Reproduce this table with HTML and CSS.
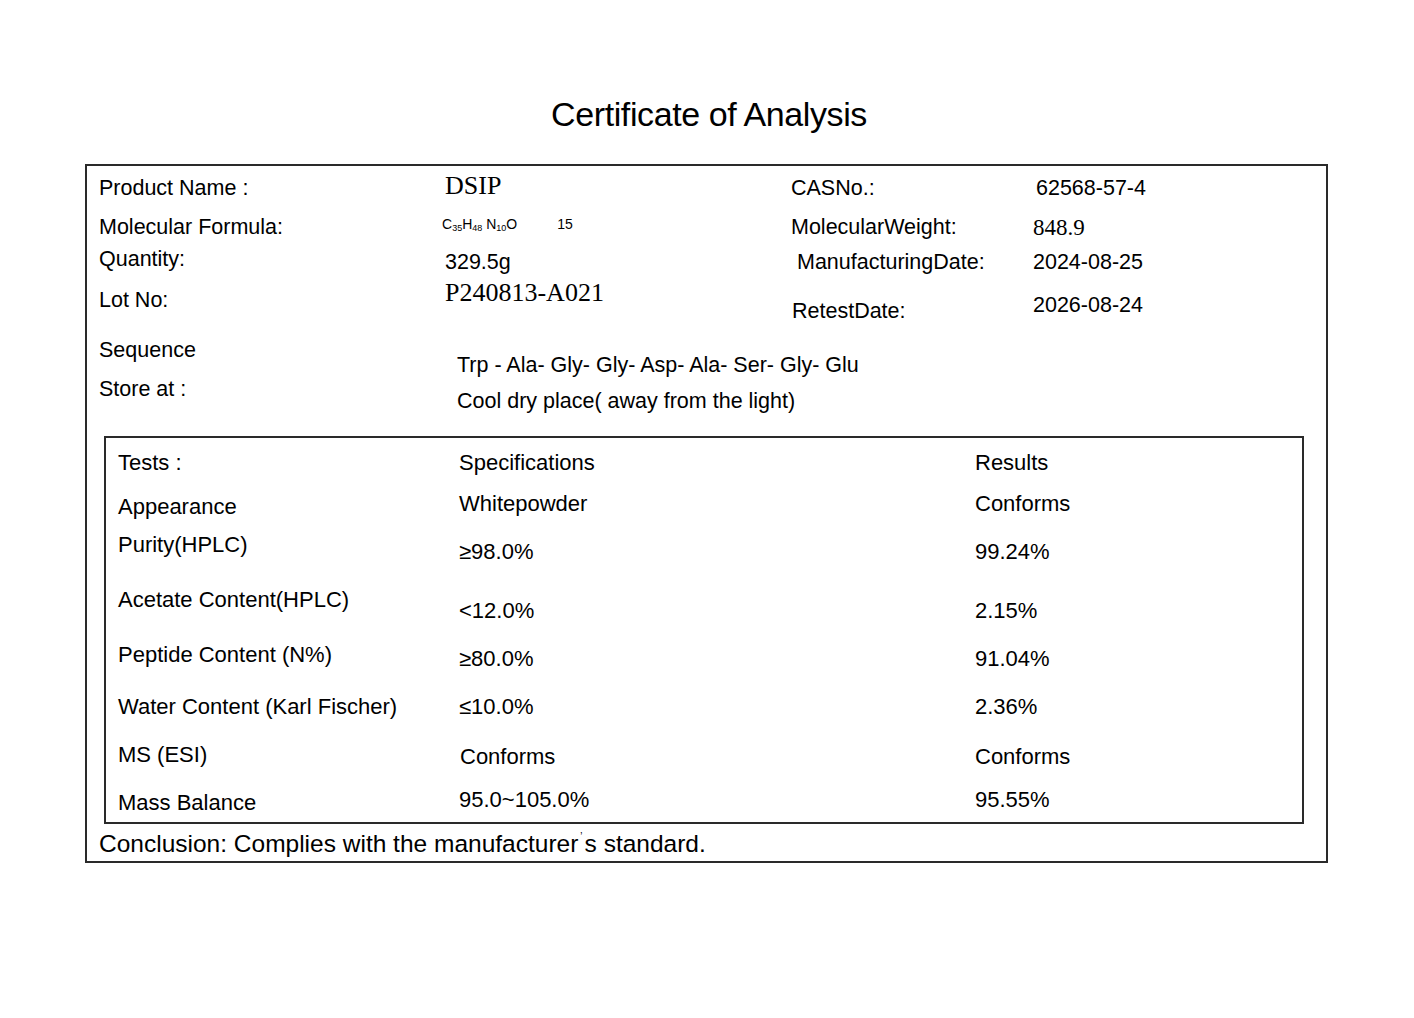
FILE: index.html
```html
<!DOCTYPE html>
<html lang="en">
<head>
<meta charset="utf-8">
<title>Certificate of Analysis</title>
<link rel="stylesheet" href="styles.css">
</head>
<body>
<div class="page">
  <h1 class="title">Certificate of Analysis</h1>
  <div class="cert">
    <div class="info">
      <div class="row r1">
        <div class="c lab dy10">Product Name :</div>
        <div class="c val serif big dy5">DSIP</div>
        <div class="c lab2 dy10">CASNo.:</div>
        <div class="c val2 dy10 nx3">62568-57-4</div>
      </div>
      <div class="row r2">
        <div class="c lab dy3">Molecular Formula:</div>
        <div class="c val formula">C<sub>35</sub>H<sub>48</sub> N<sub>10</sub>O<span class="f15">15</span></div>
        <div class="c lab2 dy3">MolecularWeight:</div>
        <div class="c val2 serif mid dy3">848.9</div>
      </div>
      <div class="row r3">
        <div class="c lab dy2">Quantity:</div>
        <div class="c val dy5">329.5g</div>
        <div class="c lab2 dy5 nx6">ManufacturingDate:</div>
        <div class="c val2 dy5">2024-08-25</div>
      </div>
      <div class="row r4">
        <div class="c lab dy12">Lot No:</div>
        <div class="c val serif big dy2">P240813-A021</div>
        <div class="c lab2 dy23 nx1">RetestDate:</div>
        <div class="c val2 dy17">2026-08-24</div>
      </div>
      <div class="row r5">
        <div class="c lab dy8">Sequence</div>
        <div class="c wide dy23">Trp - Ala- Gly- Gly- Asp- Ala- Ser- Gly- Glu</div>
      </div>
      <div class="row r6">
        <div class="c lab dy7">Store at :</div>
        <div class="c wide dy19">Cool dry place( away from the light)</div>
      </div>
    </div>

    <div class="tests">
      <div class="trow t1">
        <div class="tc tname dy13">Tests :</div>
        <div class="tc tspec dy13">Specifications</div>
        <div class="tc tres dy13">Results</div>
      </div>
      <div class="trow t2">
        <div class="tc tname dy5">Appearance</div>
        <div class="tc tspec dy2">Whitepowder</div>
        <div class="tc tres dy2">Conforms</div>
      </div>
      <div class="trow t3">
        <div class="tc tname dy3">Purity(HPLC)</div>
        <div class="tc tspec dy10">≥98.0%</div>
        <div class="tc tres dy10">99.24%</div>
      </div>
      <div class="trow t4">
        <div class="tc tname dy3">Acetate Content(HPLC)</div>
        <div class="tc tspec dy14">&lt;12.0%</div>
        <div class="tc tres dy14">2.15%</div>
      </div>
      <div class="trow t5">
        <div class="tc tname dy3">Peptide Content (N%)</div>
        <div class="tc tspec dy7">≥80.0%</div>
        <div class="tc tres dy7">91.04%</div>
      </div>
      <div class="trow t6">
        <div class="tc tname dy5">Water Content (Karl Fischer)</div>
        <div class="tc tspec dy5">≤10.0%</div>
        <div class="tc tres dy5">2.36%</div>
      </div>
      <div class="trow t7">
        <div class="tc tname dy3">MS (ESI)</div>
        <div class="tc tspec dy5 nx1">Conforms</div>
        <div class="tc tres dy5">Conforms</div>
      </div>
      <div class="trow t8">
        <div class="tc tname dy6">Mass Balance</div>
        <div class="tc tspec dy3">95.0~105.0%</div>
        <div class="tc tres dy3">95.55%</div>
      </div>
    </div>

    <p class="conclusion">Conclusion: Complies with the manufacturer<span class="apos">&#700;</span>s standard.</p>
  </div>
</div>
</body>
</html>
```

FILE: styles.css
```css
html, body {
  margin: 0;
  padding: 0;
  background: #ffffff;
}

body {
  font-family: "Liberation Sans", Arial, sans-serif;
  color: #000000;
}

.page {
  width: 1414px;
  height: 1018px;
  padding-top: 95px;
  box-sizing: border-box;
}

.title {
  margin: 0;
  height: 69px;
  font-weight: normal;
  font-size: 34px;
  letter-spacing: -0.4px;
  line-height: 38px;
  text-align: center;
  padding-left: 4px;
}

.cert {
  margin-left: 85px;
  width: 1243px;
  height: 699px;
  box-sizing: border-box;
  border: 2px solid #2a2a2a;
  display: flex;
  flex-direction: column;
}

/* ---------- info block ---------- */
.info {
  display: flex;
  flex-direction: column;
  padding-left: 12px;
}

.row {
  display: flex;
  align-items: flex-start;
}

.r1 { height: 46px; }
.r2 { height: 33px; }
.r3 { height: 31px; }
.r4 { height: 54px; }
.r5 { height: 40px; }
.r6 { height: 66px; }

.c {
  font-size: 21.5px;
  line-height: 24px;
  white-space: nowrap;
}

.lab  { width: 346px; flex: none; }
.val  { width: 346px; flex: none; }
.lab2 { width: 242px; flex: none; }
.val2 { flex: 1; }
.wide { flex: 1; padding-left: 12px; }

.serif {
  font-family: "Liberation Serif", "Times New Roman", serif;
}
.serif.big {
  font-size: 26px;
  line-height: 30px;
}
.serif.mid {
  font-size: 23px;
  line-height: 26px;
}

.formula {
  font-size: 14px;
  line-height: 16px;
  margin-top: 4px;
  margin-left: -3px;
  width: 349px;
}
.formula sub {
  font-size: 9px;
  vertical-align: -2px;
  line-height: 0;
}
.f15 {
  margin-left: 40px;
}

/* vertical nudges */
.dy2  { margin-top: 2px; }
.dy3  { margin-top: 3px; }
.dy5  { margin-top: 5px; }
.dy6  { margin-top: 6px; }
.dy7  { margin-top: 7px; }
.dy8  { margin-top: 8px; }
.dy10 { margin-top: 10px; }
.dy12 { margin-top: 12px; }
.dy13 { margin-top: 13px; }
.dy14 { margin-top: 14px; }
.dy17 { margin-top: 17px; }
.dy19 { margin-top: 19px; }
.dy23 { margin-top: 23px; }

/* horizontal nudges */
.nx1 { padding-left: 1px; }
.nx3 { padding-left: 3px; }
.nx6 { padding-left: 6px; }
.lab2.nx6 { width: 236px; }
.lab2.nx1 { width: 241px; }

/* ---------- tests table ---------- */
.tests {
  margin-left: 17px;
  width: 1200px;
  height: 388px;
  box-sizing: border-box;
  border: 2px solid #2a2a2a;
  display: flex;
  flex-direction: column;
  padding-left: 12px;
}

.trow {
  display: flex;
  align-items: flex-start;
}

.t1 { height: 52px; }
.t2 { height: 40px; }
.t3 { height: 55px; }
.t4 { height: 55px; }
.t5 { height: 50px; }
.t6 { height: 50px; }
.t7 { height: 45px; }
.t8 { height: 37px; }

.tc {
  font-size: 22px;
  line-height: 24px;
  white-space: nowrap;
}

.tname { width: 341px; flex: none; }
.tspec { width: 516px; flex: none; }
.tspec.nx1 { width: 515px; }
.tres  { flex: 1; }

/* ---------- conclusion ---------- */
.conclusion {
  margin: 6px 0 0 0;
  padding-left: 12px;
  font-size: 24.5px;
  line-height: 28px;
  white-space: nowrap;
}

.apos {
  font-size: 10px;
  vertical-align: 12px;
  line-height: 0;
  margin: 0 2px;
}
```
